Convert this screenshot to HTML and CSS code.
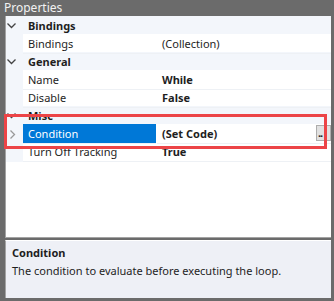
FILE: index.html
```html
<!DOCTYPE html>
<html lang="en">
<head>
    <meta charset="UTF-8">
    <title>Properties</title>
    <link rel="stylesheet" href="styles.css">
</head>
<body>
    <div class="panel">
        <div class="title">Properties</div>

        <div class="grid">
            <div class="row category">
                <span class="gutter"><svg width="9" height="6" viewBox="0 0 9 6"><path d="M0.5 0.5 L4.5 4.5 L8.5 0.5" fill="none" stroke="#444" stroke-width="1.3"/></svg></span>
                <span class="cat-name">Bindings</span>
            </div>
            <div class="row prop">
                <span class="gutter"></span>
                <span class="name">Bindings</span>
                <span class="value">(Collection)</span>
            </div>

            <div class="row category">
                <span class="gutter"><svg width="9" height="6" viewBox="0 0 9 6"><path d="M0.5 0.5 L4.5 4.5 L8.5 0.5" fill="none" stroke="#444" stroke-width="1.3"/></svg></span>
                <span class="cat-name">General</span>
            </div>
            <div class="row prop">
                <span class="gutter"></span>
                <span class="name">Name</span>
                <span class="value bold">While</span>
            </div>
            <div class="row prop">
                <span class="gutter"></span>
                <span class="name">Disable</span>
                <span class="value bold">False</span>
            </div>

            <div class="row category">
                <span class="gutter"><svg width="9" height="6" viewBox="0 0 9 6"><path d="M0.5 0.5 L4.5 4.5 L8.5 0.5" fill="none" stroke="#444" stroke-width="1.3"/></svg></span>
                <span class="cat-name">Misc</span>
            </div>
            <div class="row prop">
                <span class="gutter expander"><svg width="6" height="9" viewBox="0 0 6 9"><path d="M0.5 0.5 L4.5 4.5 L0.5 8.5" fill="none" stroke="#999" stroke-width="1.3"/></svg></span>
                <span class="name selected">Condition</span>
                <span class="value bold">(Set Code)<span class="dots">..</span></span>
            </div>
            <div class="row prop">
                <span class="gutter"></span>
                <span class="name">Turn Off Tracking</span>
                <span class="value bold">True</span>
            </div>
        </div>

        <div class="desc">
            <div class="desc-title">Condition</div>
            <div class="desc-text">The condition to evaluate before executing the loop.</div>
        </div>

        <div class="highlight"></div>
    </div>
</body>
</html>
```

FILE: styles.css
```css
body {
    margin: 0;
    background: #6b6b6b;
    font-family: "Noto Sans", "Open Sans", sans-serif;
    font-size: 11px;
    color: #1e1e1e;
}

.panel {
    position: relative;
    width: 334px;
    height: 301px;
    display: flex;
    flex-direction: column;
}

.title {
    height: 16px;
    line-height: 16px;
    padding-left: 4px;
    font-size: 12px;
    color: #f2f2f2;
}

.grid {
    margin: 0 3px 0 5px;
    height: 221px;
    background: white;
    border-bottom: 1px solid #a3a3a3;
    border-left: 1px solid #a3a3a3;
}

.row {
    display: grid;
    grid-template-columns: 17px 134px 1fr;
    height: 18px;
    line-height: 19px;
    white-space: nowrap;
}

.gutter {
    background: #f3f6fb;
    display: flex;
    align-items: center;
    padding-left: 1px;
}

.gutter.expander {
    padding-left: 4px;
}

.category {
    background: #f3f6fb;
}

.cat-name {
    grid-column: 2 / 4;
    padding-left: 5px;
    font-weight: bold;
}

.prop .name {
    padding-left: 5px;
    border-bottom: 1px solid #eef1f5;
}

.prop .value {
    padding-left: 5px;
    border-bottom: 1px solid #eef1f5;
    position: relative;
}

.bold {
    font-weight: bold;
}

.name.selected {
    background: #0078d7;
    color: white;
    margin-right: 1px;
}

.dots {
    position: absolute;
    right: 0;
    top: 1px;
    width: 12px;
    height: 14px;
    padding-left: 1px;
    line-height: 14px;
    text-align: left;
    background: #e1e1e1;
    border: 1px solid #adadad;
    font-size: 11px;
    letter-spacing: -1px;
}

.desc {
    margin: 2px 3px 3px 5px;
    flex: 1;
    background: #eef0f6;
    border-top: 1px solid #fff;
    border-left: 1px solid #a3a3a3;
    padding: 3px 6px;
}

.desc-title {
    font-weight: bold;
    line-height: 18px;
}

.desc-text {
    line-height: 17px;
}

.highlight {
    position: absolute;
    left: 4px;
    top: 114px;
    width: 317px;
    height: 29px;
    border: 3px solid #ec4447;
}
```
